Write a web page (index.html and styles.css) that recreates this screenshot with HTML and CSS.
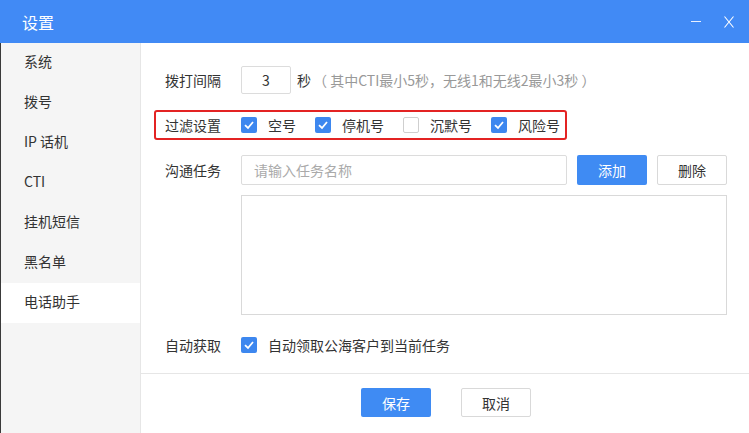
FILE: index.html
```html
<!DOCTYPE html>
<html lang="zh">
<head>
<meta charset="utf-8">
<link rel="stylesheet" href="styles.css">
</head>
<body>
<div class="window">
  <div class="titlebar">
    <span class="title">设置</span>
    <div class="controls">
      <span class="ctrl min"></span>
      <svg class="ctrl close" width="12" height="12" viewBox="0 0 12 12"><path d="M1.5 0.5 L10.5 11.5 M10.5 0.5 L1.5 11.5" stroke="#fff" stroke-width="1.1" fill="none"/></svg>
    </div>
  </div>
  <div class="body">
    <ul class="sidebar">
      <li class="item">系统</li>
      <li class="item">拨号</li>
      <li class="item">IP 话机</li>
      <li class="item">CTI</li>
      <li class="item">挂机短信</li>
      <li class="item">黑名单</li>
      <li class="item active">电话助手</li>
    </ul>
    <div class="main">
      <div class="content">
        <div class="row row-interval">
          <span class="label">拨打间隔</span>
          <span class="num-input">3</span>
          <span class="unit">秒</span>
          <span class="hint">（ 其中CTI最小5秒，无线1和无线2最小3秒 ）</span>
        </div>
        <div class="row row-filter">
          <span class="label">过滤设置</span>
          <span class="check on"><svg width="16" height="16" viewBox="0 0 16 16"><path d="M4 8.2 L7 11 L12 5" stroke="#fff" stroke-width="1.8" fill="none"/></svg></span>
          <span class="opt">空号</span>
          <span class="check on"><svg width="16" height="16" viewBox="0 0 16 16"><path d="M4 8.2 L7 11 L12 5" stroke="#fff" stroke-width="1.8" fill="none"/></svg></span>
          <span class="opt">停机号</span>
          <span class="check off"></span>
          <span class="opt">沉默号</span>
          <span class="check on"><svg width="16" height="16" viewBox="0 0 16 16"><path d="M4 8.2 L7 11 L12 5" stroke="#fff" stroke-width="1.8" fill="none"/></svg></span>
          <span class="opt last">风险号</span>
        </div>
        <div class="row row-task">
          <span class="label">沟通任务</span>
          <span class="text-input">请输入任务名称</span>
          <span class="btn primary">添加</span>
          <span class="btn default">删除</span>
        </div>
        <div class="row row-area">
          <span class="label"></span>
          <div class="textarea"></div>
        </div>
        <div class="row row-auto">
          <span class="label">自动获取</span>
          <span class="check on"><svg width="16" height="16" viewBox="0 0 16 16"><path d="M4 8.2 L7 11 L12 5" stroke="#fff" stroke-width="1.8" fill="none"/></svg></span>
          <span class="opt">自动领取公海客户到当前任务</span>
        </div>
      </div>
      <div class="footer">
        <span class="btn primary">保存</span>
        <span class="btn default">取消</span>
      </div>
    </div>
  </div>
</div>
</body>
</html>
```
FILE: styles.css
```css
* { box-sizing: border-box; }
html, body { margin: 0; padding: 0; }
body {
  width: 749px;
  height: 433px;
  overflow: hidden;
  background: #fff;
  font-family: "Noto Sans CJK SC", "Noto Sans", sans-serif;
  font-size: 14px;
  color: #333;
}
.window { display: flex; flex-direction: column; height: 433px; }
.titlebar {
  height: 43px;
  background: #418af5;
  display: flex;
  align-items: center;
  justify-content: space-between;
  padding: 0 14px 0 22px;
  color: #fff;
  flex: none;
}
.title { font-size: 16px; line-height: 1; }
.controls { display: flex; align-items: center; gap: 22px; }
.min { width: 10px; height: 1px; background: #e8f0ff; display: block; }
.close { display: block; }
.body { display: flex; flex: 1; min-height: 0; }
.sidebar {
  list-style: none;
  margin: 0;
  padding: 0;
  width: 141px;
  background: #f5f5f5;
  border-right: 1px solid #e6e6e6;
  border-left: 1px solid #3a3a3a;
  flex: none;
}
.item {
  height: 40px;
  line-height: 37px;
  padding-left: 23px;
  color: #333;
}
.item.active { background: #fff; }
.main { flex: 1; display: flex; flex-direction: column; }
.content { padding: 23px 0 0 13px; flex: 1; }
.row { display: flex; align-items: center; padding-left: 11px; }
.label { width: 76px; flex: none; }
.num-input {
  width: 50px; height: 28px;
  border: 1px solid #dcdcdc;
  border-radius: 2px;
  display: flex; align-items: center; justify-content: center;
}
.unit { margin-left: 6px; }
.hint { color: #999; margin-left: 2px; }
.row-filter {
  margin-top: 16px;
  width: 413px;
  height: 30px;
  border: 2px solid #e32323;
  border-radius: 3px;
  padding-left: 9px;
}
.check {
  width: 16px; height: 16px; flex: none;
  border-radius: 2px;
  display: block;
}
.check svg { display: block; }
.check.on { background: #3d87ef; }
.check.off { background: #fff; border: 1px solid #cfcfcf; }
.opt { margin-left: 11px; margin-right: 19px; }
.opt.last { margin-right: 0; }
.row-task { margin-top: 15px; }
.text-input {
  width: 326px; height: 30px;
  border: 1px solid #dcdcdc;
  border-radius: 2px;
  color: #aaa;
  padding-left: 12px;
  display: flex; align-items: center;
}
.btn {
  width: 70px; height: 30px;
  border-radius: 2px;
  display: flex; align-items: center; justify-content: center;
  flex: none;
}
.btn.primary { background: #3f8bf3; color: #fff; }
.btn.default { background: #fff; border: 1px solid #d9d9d9; color: #333; }
.row-task .btn.primary { margin-left: 10px; }
.row-task .btn.default { margin-left: 10px; }
.row-area { margin-top: 10px; align-items: flex-start; }
.textarea {
  width: 486px; height: 120px;
  border: 1px solid #d9d9d9;
}
.row-auto { margin-top: 20px; height: 20px; }
.footer {
  border-top: 1px solid #e6e6e6;
  height: 60px;
  flex: none;
  display: flex;
  justify-content: center;
  gap: 30px;
  padding-top: 14px;
  padding-left: 2px;
}
.footer .btn { height: 29px; }
```
